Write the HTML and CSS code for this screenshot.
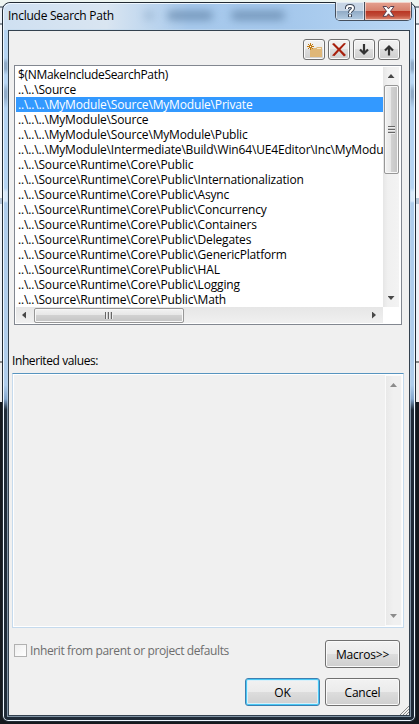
FILE: index.html
```html
<!DOCTYPE html>
<html lang="en">
<head>
<meta charset="utf-8">
<title>Include Search Path</title>
<link rel="stylesheet" href="styles.css">
</head>
<body>
<div class="window">
  <header class="titlebar">
    <h1>Include Search Path</h1>
    <i class="smudge s1"></i><i class="smudge s2"></i><i class="smudge s3"></i>
    <div class="caption">
      <button class="help" aria-label="Help"><svg width="12" height="14" viewBox="0 0 12 14"><path d="M3 5V4q0-2 3-2t3 2q0 1.500-1.500 2.300T6 9M6 10.300v2.700" fill="none" stroke="#3c4656" stroke-width="4"/><path d="M3 5V4q0-2 3-2t3 2q0 1.500-1.500 2.300T6 9M6 10.500v2" fill="none" stroke="#fff" stroke-width="2"/></svg></button>
      <button class="close" aria-label="Close"><svg width="13" height="11" viewBox="0 0 13 11"><path d="M1 .5h3.500l2 2.300 2-2.300H12L8.500 5.300l3.500 5H8.500l-2-2.500-2 2.500H1l3.500-5z" fill="#fff" stroke="#554052"/></svg></button>
    </div>
  </header>
  <main class="client">
    <div class="toolbar">
      <button aria-label="New line"><svg width="20" height="19" viewBox="0 0 20 19"><path d="M6 8h6l1-1h5v10H6z" fill="#dfb778"/><path d="M13 8.500h4" stroke="#f8e7c8"/><path d="M6.500 3v7M3 6.500h7M4 4l5 5M9 4L4 9" stroke="#c07a14"/><path d="M6 6h1v1H6z" fill="#fff"/></svg></button>
      <button aria-label="Delete"><svg width="20" height="19" viewBox="0 0 20 19"><path d="M3 4l2-1 5 5 5-5 2 .5-5.500 6 5.500 5.500-2 1.500-5-5.500L5.500 16 3 15.500 8.500 9.500z" fill="#a8200d"/></svg></button>
      <button aria-label="Move down"><svg width="20" height="19" viewBox="0 0 20 19"><path d="M10 4v9M6 9.500l4 4 4-4" fill="none" stroke="#333" stroke-width="2.200"/></svg></button>
      <button aria-label="Move up"><svg width="20" height="19" viewBox="0 0 20 19"><path d="M10 15.500v-9M6 10.500l4-4 4 4" fill="none" stroke="#333" stroke-width="2.200"/></svg></button>
    </div>
    <section class="list">
      <ul>
        <li class="macro">$(NMakeIncludeSearchPath)</li>
        <li>..\..\Source</li>
        <li class="selected">..\..\..\MyModule\Source\MyModule\Private</li>
        <li>..\..\..\MyModule\Source</li>
        <li>..\..\..\MyModule\Source\MyModule\Public</li>
        <li>..\..\..\MyModule\Intermediate\Build\Win64\UE4Editor\Inc\MyModule</li>
        <li>..\..\Source\Runtime\Core\Public</li>
        <li>..\..\Source\Runtime\Core\Public\Internationalization</li>
        <li>..\..\Source\Runtime\Core\Public\Async</li>
        <li>..\..\Source\Runtime\Core\Public\Concurrency</li>
        <li>..\..\Source\Runtime\Core\Public\Containers</li>
        <li>..\..\Source\Runtime\Core\Public\Delegates</li>
        <li>..\..\Source\Runtime\Core\Public\GenericPlatform</li>
        <li>..\..\Source\Runtime\Core\Public\HAL</li>
        <li>..\..\Source\Runtime\Core\Public\Logging</li>
        <li>..\..\Source\Runtime\Core\Public\Math</li>
      </ul>
      <div class="vbar"><i class="arrow up"></i><span class="thumb"><i class="grip"></i></span><i class="arrow down"></i></div>
      <div class="hbar"><i class="arrow left"></i><span class="thumb"><i class="grip"></i></span><i class="arrow right"></i></div>
    </section>
    <h2>Inherited values:</h2>
    <section class="inherited"><div class="vbar disabled"><i class="arrow up"></i><i class="arrow down"></i></div></section>
    <div class="options">
      <label><span class="box"></span><span>Inherit from parent or project defaults</span></label>
      <button class="push">Macros&gt;&gt;</button>
    </div>
    <div class="actions"><button class="push default">OK</button><button class="push">Cancel</button></div>
    <svg class="resize" width="10" height="10" viewBox="0 0 10 10"><path d="M1 10l9-9M4 10l6-6M7 10l3-3" stroke="#888"/></svg>
  </main>
</div>
</body>
</html>
```
FILE: styles.css
```css
* { box-sizing: border-box; }
body {
  margin: 0; height: 724px; overflow: hidden; padding: 2px 3px 2px 2px;
  font: 12px/15px "Open Sans", "Noto Sans", sans-serif; color: #000;
  background: linear-gradient(#eef5f1 0 6px, #8b949d 6px 8px, #edf2f8 8px 23px, #8b949d 23px 25px, #f7f8fa 25px 198px, #b8c7d9 198px 204px, #edf2f8 204px 361px, #888 361px 363px, #eee 363px 402px, #15191e 402px);
}
h1, h2, ul { margin: 0; padding: 0; font: inherit; }
button { padding: 0; font: inherit; color: #000; }
svg { display: block; }
.window {
  height: 720px; width: 414px; padding: 0 5px 5px; border: 1px solid #222b34; border-radius: 8px 8px 6px 6px;
  box-shadow: inset 0 0 0 1px #eef7ff;
  background: linear-gradient(#b5d4f3 0 55px, #8faac7 60px 66px, #b9d7f5 72px 80px, #91acc9 88px 94px, #b5d4f3 105px 185px, #d9e9f9 189px 198px, #afcdec 200px 382px, #84a7ce 396px, #1f2b38 407px);
}
.titlebar {
  position: relative; height: 27px; margin: 0 -4px; padding: 0 0 0 3px; display: flex; justify-content: space-between;
  border-radius: 7px 7px 0 0; border: solid #eef7ff; border-width: 1px 0 0;
  background: linear-gradient(90deg, #cfe0f1, #d9e5f1 25%, #a7c9ec 45%, #a5c8ec 70%, #b9d7f5);
}
.titlebar h1 { position: relative; z-index: 1; padding: 4px 0 0 1px; font-size: 12px; letter-spacing: -.26px; }
.smudge { position: absolute; height: 9px; border-radius: 5px; background: #587a9e; filter: blur(4px); opacity: .65; top: 7px; }
.s1 { left: 140px; width: 10px; opacity: .3; }
.s2 { left: 163px; width: 46px; }
.s3 { left: 227px; width: 54px; }
.caption { display: flex; height: 19px; margin: -2px 2px 0 0; width: 77px; border: 1px solid #454f5d; border-top: 0; border-radius: 0 0 5px 5px; overflow: hidden; }
.caption button { border: 0; display: grid; place-items: center; box-shadow: inset 0 0 0 1px #ffffff88; }
.help { width: 28px; background: linear-gradient(#c6d5e5 50%, #8fa9c4 50%, #b4cce2); }
.close { flex: 1; border-left: 1px solid #454f5d !important; background: linear-gradient(#e5a291 0, #d6816d 48%, #b93422 50%, #c04c38 75%, #e18e77); }
.client {
  position: relative; height: 686px; width: 402px; padding: 8px 7px 0 5px; background: #f0f0f0; border: 1px solid #33414f;
  outline: 1px solid #c1d8ed99;
}
.toolbar { display: flex; justify-content: flex-end; gap: 3px; padding-right: 2px; height: 26px; }
.toolbar button { width: 22px; height: 21px; padding: 0; }
.toolbar button, .push {
  border: 1px solid #707070; border-radius: 3px; box-shadow: inset 0 0 0 1px #fafafa;
  background: linear-gradient(#f2f2f2, #ebebeb 49%, #ddd 50%, #cfcfcf);
}
.list {
  width: 388px; height: 260px; padding: 1px; border: 1px solid #828790; background: #fff;
  display: grid; grid-template: 240px 16px / 367px 16px; overflow: hidden;
}
.list ul { list-style: none; overflow: hidden; min-width: 0; }
.list li { height: 15px; line-height: 16px; padding-left: 2px; white-space: nowrap; letter-spacing: -.165px; }
.list .macro { letter-spacing: -.32px; }
.list .selected { background: #3399ff; color: #fff; }
.vbar { display: flex; flex-direction: column; align-items: center; background: linear-gradient(90deg, #e6e6e6, #f0f0f0 30%, #f3f3f3); }
.hbar { display: flex; align-items: center; background: linear-gradient(#e6e6e6, #f0f0f0); }
.thumb { display: grid; place-items: center; border: 1px solid #979797; border-radius: 2px; box-shadow: inset 0 0 0 1px #f8f8f8; }
.vbar .thumb { height: 89px; width: 15px; background: linear-gradient(90deg, #f2f2f2, #e6e6e6 48%, #d1d1d1 50%, #c4c4c4); }
.hbar .thumb { width: 150px; height: 15px; background: linear-gradient(#f2f2f2, #e6e6e6 48%, #d1d1d1 50%, #c4c4c4); }
.vbar .grip { width: 7px; height: 8px; background: repeating-linear-gradient(#666 0 1px, #eee 1px 2px, #ccc 2px 3px); }
.hbar .grip { width: 8px; height: 7px; background: repeating-linear-gradient(90deg, #666 0 1px, #eee 1px 2px, #ccc 2px 3px); }
.arrow { width: 7px; height: 4px; background: #484848; clip-path: polygon(50% 0, 100% 100%, 0 100%); }
.up { margin: 7px 0; }
.down { clip-path: polygon(0 0, 100% 0, 50% 100%); margin: auto 0 7px; }
.left { width: 4px; height: 7px; margin: 0 8px 0 6px; clip-path: polygon(100% 0, 100% 100%, 0 50%); }
.right { width: 4px; height: 7px; margin: 0 7px 0 auto; clip-path: polygon(0 0, 100% 50%, 0 100%); }
.hbar { width: 367px; }
h2 { margin: 28px 0 5px -2px; letter-spacing: -.4px; }
.inherited {
  width: 392px; height: 255px; margin-left: -2px; padding: 1px; border: 1px solid #c5daed; border-top-color: #5794bf;
  box-shadow: inset 0 0 0 1px #fff; display: flex; justify-content: flex-end;
}
.inherited .vbar { width: 17px; border: 1px solid #fafafa; background: linear-gradient(90deg, #e9e9e9, #f0f0f0 50%); }
.disabled .arrow { background: #8b8b8b; }
.options { height: 28px; margin-top: 12px; padding-right: 2px; display: flex; justify-content: space-between; }
.options label { display: flex; gap: 3px; margin-top: 3px; color: #6d6d6d; letter-spacing: -.38px; white-space: nowrap; }
.box { width: 13px; height: 13px; margin-top: 1px; border: 1px solid #b1b1b1; background: linear-gradient(135deg, #eee, #fff); }
.push { width: 75px; height: 28px; letter-spacing: -.2px; }
.actions { display: flex; justify-content: flex-end; gap: 5px; padding-right: 2px; margin-top: 10px; }
.default { border-color: #3c7fb1; box-shadow: inset 0 0 0 1px #48c8f5, inset 0 0 0 2px #d8f0fa; }
.resize { position: absolute; right: 0; bottom: 0; }
```
